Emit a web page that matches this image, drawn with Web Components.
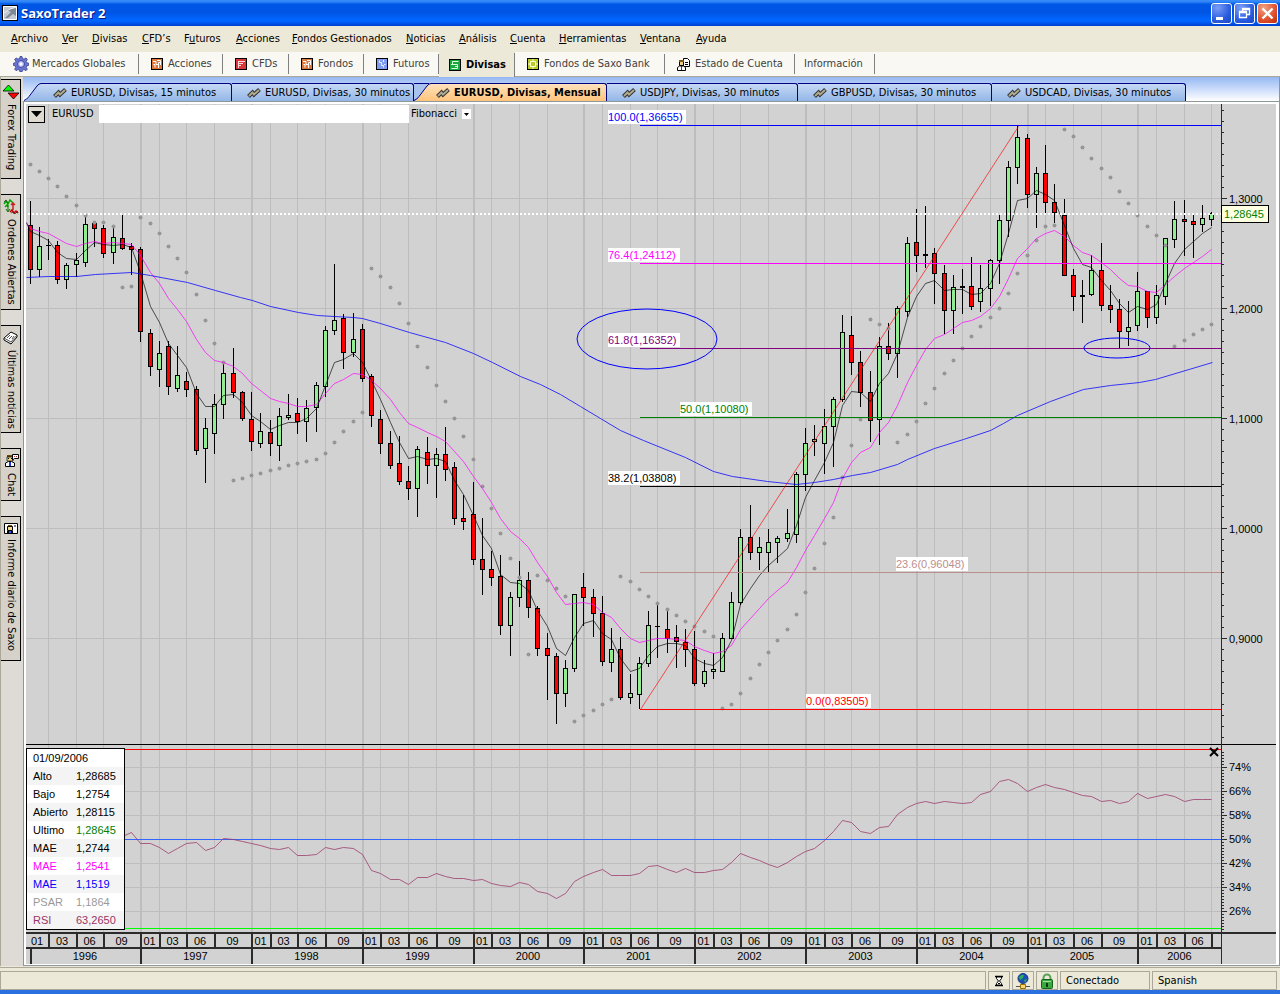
<!DOCTYPE html>
<html lang="es">
<head>
<meta charset="utf-8">
<title>SaxoTrader 2</title>
<style>
  :root {
    --face: #ece9d8;
    --shade: #aca899;
    --plot: #d2d2d2;
    --navy: #000080;
    --ui-font: "DejaVu Sans Condensed", "DejaVu Sans", sans-serif;
    --chart-font: "Liberation Sans", Arial, sans-serif;
  }

  html, body {
    margin: 0;
    height: 100%;
  }

  body {
    font: 11px/14px var(--ui-font);
    color: #000;
    background: var(--face);
  }
</style>
</head>
<body>

<sx-window>
  <sx-title-bar slot="top">SaxoTrader 2</sx-title-bar>

  <sx-menu-bar slot="top">
    <button><u>A</u>rchivo</button>
    <button><u>V</u>er</button>
    <button><u>D</u>ivisas</button>
    <button><u>C</u>FD’s</button>
    <button>F<u>u</u>turos</button>
    <button><u>A</u>cciones</button>
    <button><u>F</u>ondos Gestionados</button>
    <button><u>N</u>oticias</button>
    <button><u>A</u>nálisis</button>
    <button><u>C</u>uenta</button>
    <button><u>H</u>erramientas</button>
    <button><u>V</u>entana</button>
    <button><u>A</u>yuda</button>
  </sx-menu-bar>

  <sx-module-bar slot="top">
    <sx-module icon="gear" style="width:126px">Mercados Globales</sx-module>
    <sx-module icon="shares" style="width:84px">Acciones</sx-module>
    <sx-module icon="cfd" style="width:66px">CFDs</sx-module>
    <sx-module icon="shares" style="width:75px">Fondos</sx-module>
    <sx-module icon="futures" style="width:75px">Futuros</sx-module>
    <sx-module icon="forex" active style="width:76px">Divisas</sx-module>
    <sx-module icon="bank" style="width:150px">Fondos de Saxo Bank</sx-module>
    <sx-module icon="account" style="width:130px">Estado de Cuenta</sx-module>
    <sx-module style="width:80px">Información</sx-module>
  </sx-module-bar>

  <sx-side-tab slot="side" icon="updown" style="height:100px">Forex Trading</sx-side-tab>
  <sx-side-tab slot="side" icon="orders" style="height:116px">Ordenes Abiertas</sx-side-tab>
  <sx-side-tab slot="side" icon="news" style="height:108px">Últimas noticias</sx-side-tab>
  <sx-side-tab slot="side" icon="chat" style="height:53px">Chat</sx-side-tab>
  <sx-side-tab slot="side" icon="report" style="height:145px">Informe diario de Saxo</sx-side-tab>

  <sx-doc-tab slot="docs" slanted style="width:208px">EURUSD, Divisas, 15 minutos</sx-doc-tab>
  <sx-doc-tab slot="docs" style="width:182px">EURUSD, Divisas, 30 minutos</sx-doc-tab>
  <sx-doc-tab slot="docs" slanted active style="width:193px">EURUSD, Divisas, Mensual</sx-doc-tab>
  <sx-doc-tab slot="docs" style="width:191px">USDJPY, Divisas, 30 minutos</sx-doc-tab>
  <sx-doc-tab slot="docs" style="width:194px">GBPUSD, Divisas, 30 minutos</sx-doc-tab>
  <sx-doc-tab slot="docs" style="width:194px">USDCAD, Divisas, 30 minutos</sx-doc-tab>

  <sx-chart></sx-chart>

  <sx-status-bar slot="bottom">
    <span></span>
    <sx-icon name="hourglass"></sx-icon>
    <sx-icon name="network"></sx-icon>
    <sx-icon name="lock"></sx-icon>
    <span>Conectado</span>
    <span>Spanish</span>
  </sx-status-bar>
</sx-window>

<script>
const FACE = '<path d="M4 2h6v2H4z" fill="#6b4a10"/><path d="M4 4h6v4H4z" fill="#f3d98c" stroke="#000" stroke-width=".7"/><path d="M5 5h1v1H5zM8 5h1v1H8z" fill="#000"/><path d="M2.500 13.500V10l3-1.500h3l3 1.500v3.500z" fill="#fff" stroke="#000"/><path d="M6 9h2v4H6z" fill="#2233dd"/>';

/* name -> [size, markup] */
const ICONS = {
  app: [16, '<rect x=".5" y=".5" width="15" height="15" fill="#8b95a3" stroke="#000"/><path d="M1.500 1.500h13v13h-13z" fill="#c3c9d1" stroke="#fff"/><path d="M3 13 9 7 5 5l9-2v8l-3-2-5 4z" fill="#7d8896"/><path d="M2 8 8 4l6-2" fill="none" stroke="#eef1f4"/>'],
  gear: [16, '<g fill="#6a74d4" stroke="#2b357f" stroke-width=".7"><path d="M7 .5h2l.5 2 1.500.6 1.900-1.200 1.500 1.500-1.200 1.900.6 1.400 2 .6v2l-2 .6-.6 1.400 1.200 1.900-1.500 1.500-1.900-1.200-1.500.6-.5 2H7l-.5-2-1.500-.6-1.900 1.200-1.500-1.500 1.200-1.900-.6-1.400-2-.6v-2l2-.6.6-1.400-1.200-1.900 1.500-1.500L5 3.100l1.500-.6z"/></g><circle cx="8" cy="8" r="3.500" fill="#b8c0f4" stroke="#3d4799"/><circle cx="8" cy="8" r="1.500" fill="#fff"/>'],
  shares: [12, '<rect x=".5" y=".5" width="11" height="11" fill="#d9773c" stroke="#000"/><path d="M2 3.500h3v3h2M4 9.500v-3H2.500M6 2.500h3.500V7M9.500 4.500H7.500V10" fill="none" stroke="#fff"/>'],
  cfd: [12, '<rect x=".5" y=".5" width="11" height="11" fill="#d8383c" stroke="#000"/><path d="M3 3.500h7M3 5.500h5M3 7.500h3M3.500 3v7" fill="none" stroke="#ffd9d9"/>'],
  futures: [12, '<rect x=".5" y=".5" width="11" height="11" fill="#7f9cf0" stroke="#000"/><path d="M3.500 2.500v2h2v3h2v2M7.500 2v2M8 6.500h1.500" fill="none" stroke="#e6edff"/>'],
  forex: [12, '<rect x=".5" y=".5" width="11" height="11" fill="#16a83a" stroke="#000"/><path d="M9.500 2.500h-6v3h5v4h-6M2 5.500h2M6 7.500h2" fill="none" stroke="#d9ffe0"/>'],
  bank: [12, '<rect x=".5" y=".5" width="11" height="11" fill="#bccb2c" stroke="#000"/><path d="M3.500 3.500h5v5h-5zM6 1v2M6 9v2M1 6h2M9 6h2" fill="none" stroke="#fbffd0"/>'],
  account: [13, '<path d="M6.500.5h4l2 2v6h-6z" fill="#fff" stroke="#000"/><path d="M8 4.500h3M8 6.500h3" stroke="#000"/><path d="M2.500 2.500h4v5h-4z" fill="#f0d080" stroke="#000"/><path d="M2 2h5v2H2z" fill="#7a5a10"/><path d="M.5 12.500V9.500l2-1.500h4l2 1.500v3z" fill="#fff" stroke="#000"/><path d="M4 8h1v4H4z" fill="#23c"/>'],
  updown: [16, '<path d="M5.500 1 11 7H0z" fill="#0f0" stroke="#000" stroke-width=".8"/><path d="M5 9h11l-5.500 6z" fill="#f00" stroke="#000" stroke-width=".8"/>'],
  orders: [16, '<path d="m1 5 2-3 2 3 2-4 3 3 M2 8l2-2 1 2" fill="none" stroke="#0a0" stroke-width="1.500"/><path d="M5 6v6m-2-2 2 3 2-3" fill="none" stroke="#070"/><path d="M10 11V4M8 6l2-2 2 2" fill="none" stroke="#c22" stroke-width="1.500"/><path d="m7 13 2-2 2 3 2-2 2 2" fill="none" stroke="#c00" stroke-width="1.500"/><path d="m1 3 2-2 2 3M8 14l2-1 2 2 3-3" fill="none" stroke="#222" stroke-width=".7"/>'],
  news: [16, '<path d="m1 8 7-6 6 3v2l-6 7-7-4z" fill="#fff" stroke="#000"/><path d="m1 8 7 4 6-7M4 8l3-3M6 9l3-3M9 9l2-3" fill="none" stroke="#555"/>'],
  chat: [16, FACE + '<path d="M9.500 1.500h6v4h-4l-2 1.500z" fill="#fff" stroke="#000"/><path d="M11 3h1v1h-1zM13 3h1v1h-1z" fill="#c33"/>'],
  report: [14, '<path d="M.5 2.500h13v10H.5z" fill="#fff" stroke="#000"/><path d="M4 4h4v1H4z" fill="#6b4a10"/><path d="M3.500 5.500h5v4h-5z" fill="#f3d98c" stroke="#000"/><path d="M3 10h6v2H3z" fill="#000"/><path d="M5 10h2v2H5z" fill="#35f"/><path d="M10 4h2v2h-2z" fill="#779"/>'],
  zigzag: [14, '<path d="m1.500 10.500 4-4 1.500 2 5.500-5" fill="none" stroke="#333" stroke-width="4"/><path d="m2 10 3.500-3.500 1.500 2L12 4" fill="none" stroke="#b0ab8e" stroke-width="2"/>'],
  hourglass: [12, '<path d="M2 1.500h8M2 10.500h8" stroke="#000" stroke-width="1.500"/><path d="M3.500 2v1.500L5.500 6l-2 2.500V10h5V8.500L6.500 6l2-2.500V2z" fill="#fff" stroke="#000"/><path d="M5 9h2V8H5z"/>'],
  network: [16, '<circle cx="8" cy="5.500" r="5" fill="#1b50b8" stroke="#123a80"/><path d="M4 4q3-3 5-2l-1 3-3 2zM9 7l3-1-2 4z" fill="#2fae5a"/><path d="M1 13.500h14M8 10v2" stroke="#555"/><path d="M5.500 11.500h5v4h-5z" fill="#f6d774" stroke="#9a7100"/>'],
  lock: [16, '<path d="M4.500 8V5a3.500 3.500 0 0 1 7 0v3" fill="none" stroke="#5aa05a" stroke-width="2"/><rect x="2.500" y="6.500" width="11" height="9" rx="1" fill="#3aa83e" stroke="#14641a"/><path d="M4 8h8v1H4z" fill="#9fe09f"/><path d="M7 10h2v4H7z" fill="#0a3a10"/>'],
  minimize: [19, '<path d="M4 13h7v3H4z" fill="#fff"/>'],
  restore: [19, '<path d="M7.500 7V4.500h7v6H12M7.500 5.500h7M4.500 7.500h7v6h-7zM4.500 8.500h7" fill="none" stroke="#fff" stroke-width="1.300"/>'],
  close: [19, '<path d="m4.500 4.500 10 10m0-10-10 10" stroke="#fff" stroke-width="2.400"/>'],
};

class SxElement extends HTMLElement {
  constructor() {
    super();
    this.attachShadow({ mode: 'open' });
  }

  connectedCallback() {
    this.shadowRoot.innerHTML = this.template();
  }
}

class SxIcon extends SxElement {
  template() {
    const [size, body] = ICONS[this.getAttribute('name')];
    return `
      <style>
        :host { display: inline-flex; flex: none; }
        svg { display: block; }
      </style>
      <svg width="${size}" height="${size}" viewBox="0 0 ${size} ${size}" aria-hidden="true">${body}</svg>
    `;
  }
}

class SxWindow extends SxElement {
  template() {
    return `
      <style>
        :host {
          display: flex;
          flex-direction: column;
          min-height: 100vh;
        }

        .body {
          flex: 1;
          display: flex;
          min-height: 600px;
          border-left: 1px solid var(--shade);
          background: #dedad5;
        }

        .side {
          flex: none;
          width: 22px;
          display: flex;
          flex-direction: column;
          gap: 15px;
          padding-top: 2px;
        }

        .main {
          flex: 1;
          min-width: 0;
          display: flex;
          flex-direction: column;
          border-right: 1px solid #8d9799;
          border-bottom: 1px solid #8d9799;
        }

        .docs {
          display: flex;
          height: 18px;
          padding: 6px 0 0 1px;
          background: linear-gradient(#96b8f4, #fff);
          border-bottom: 1px solid #8d9799;
        }

        .frame {
          flex: 1;
          display: flex;
          border-left: 1px solid #8d9799;
        }

        .chart {
          flex: 1;
          display: flex;
          border: solid #fff;
          border-width: 2px 3px 1px 2px;
        }

        ::slotted(sx-chart) { flex: 1; }
      </style>
      <slot name="top"></slot>
      <div class="body">
        <div class="side"><slot name="side"></slot></div>
        <div class="main">
          <div class="docs"><slot name="docs"></slot></div>
          <div class="frame"><div class="chart"><slot></slot></div></div>
        </div>
      </div>
      <slot name="bottom"></slot>
    `;
  }
}

class SxTitleBar extends SxElement {
  template() {
    return `
      <style>
        :host {
          display: flex;
          align-items: center;
          height: 26px;
          padding: 0 2px;
          gap: 3px;
          box-sizing: border-box;
          color: #fff;
          font: bold 13px/18px "Open Sans", sans-serif;
          text-shadow: 1px 1px #0a1883;
          background: linear-gradient(#3b8cf6 0, #2c83f8 2px, #0058e6 4px, #0054e3 12px, #0066fe 20px, #005ffb 22px, #0040cc 26px);
        }

        .name { flex: 1; }

        .buttons {
          display: flex;
          gap: 2px;
        }

        button {
          width: 21px;
          height: 21px;
          padding: 0;
          border: 1px solid #fff;
          border-radius: 3px;
          display: grid;
          place-items: center;
          background: radial-gradient(circle at 30% 20%, #7a9df5, #2a5ce0 60%, #1b46c4);
        }

        .close { background: radial-gradient(circle at 30% 20%, #f0a184, #e0502c 60%, #b82c08); }
      </style>
      <sx-icon name="app"></sx-icon>
      <span class="name"><slot></slot></span>
      <div class="buttons">
        <button aria-label="Minimizar"><sx-icon name="minimize"></sx-icon></button>
        <button aria-label="Restaurar"><sx-icon name="restore"></sx-icon></button>
        <button class="close" aria-label="Cerrar"><sx-icon name="close"></sx-icon></button>
      </div>
    `;
  }
}

class SxMenuBar extends SxElement {
  template() {
    return `
      <style>
        :host {
          display: grid;
          grid-template-columns: 51px 30px 50px 42px 52px 56px 114px 53px 51px 49px 81px 56px auto;
          align-items: center;
          justify-content: start;
          height: 26px;
          padding: 0 11px;
          box-sizing: border-box;
          background: var(--face);
        }

        ::slotted(button) {
          padding: 0;
          border: 0;
          background: none;
          font: inherit;
          color: inherit;
          text-align: left;
          white-space: nowrap;
        }
      </style>
      <slot></slot>
    `;
  }
}

class SxModuleBar extends SxElement {
  template() {
    return `
      <style>
        :host {
          display: flex;
          height: 25px;
          padding-left: 13px;
          box-sizing: border-box;
          background: #f9f8f2;
          border-bottom: 1px solid var(--shade);
        }
      </style>
      <slot></slot>
    `;
  }
}

class SxModule extends SxElement {
  template() {
    const icon = this.getAttribute('icon');
    return `
      <style>
        :host { display: flex; flex: none; padding: 2px 0; box-sizing: border-box; }

        button {
          flex: 1;
          display: flex;
          align-items: center;
          gap: 5px;
          padding: 0 0 0 ${icon ? 12 : 9}px;
          border: 0;
          border-right: 1px solid #808080;
          background: none;
          font: inherit;
          color: #404040;
          white-space: nowrap;
        }

        :host([icon="gear"]) button { padding-left: 0; gap: 3px; }

        :host([active]) {
          margin-bottom: -1px;
          padding: 1px 0 0;
          background: var(--face);
        }

        :host([active]) button {
          color: #000;
          font-weight: bold;
          padding-left: 10px;
        }
      </style>
      <button>${icon ? `<sx-icon name="${icon}"></sx-icon>` : ''}<slot></slot></button>
    `;
  }
}

class SxSideTab extends SxElement {
  template() {
    return `
      <style>
        :host { display: flex; width: 20px; }

        button {
          flex: 1;
          display: flex;
          flex-direction: column;
          align-items: center;
          gap: 4px;
          min-width: 0;
          padding: 4px 0 0;
          border: 1px solid #000;
          border-left: 0;
          background: #d6d1c9;
          font: inherit;
          color: inherit;
        }

        span {
          writing-mode: vertical-rl;
          white-space: nowrap;
        }
      </style>
      <button><sx-icon name="${this.getAttribute('icon')}"></sx-icon><span><slot></slot></span></button>
    `;
  }
}

class SxDocTab extends SxElement {
  template() {
    const active = this.hasAttribute('active');
    const top = active ? '#ffe2bd' : '#c6d9f4';
    const bottom = active ? '#ffc47c' : '#94b6e8';
    return `
      <style>
        :host {
          display: flex;
          flex: none;
          height: 18px;
        }

        :host([active]) { font-weight: bold; }

        svg { display: none; flex: none; }
        :host([slanted]) svg { display: block; }

        button {
          flex: 1;
          min-width: 0;
          display: flex;
          align-items: center;
          gap: 4px;
          padding: 0 0 0 15px;
          border: 0;
          border-top: 1px solid var(--navy);
          border-right: 1px solid var(--navy);
          border-top-right-radius: 3px;
          background: linear-gradient(${top}, ${bottom});
          font: inherit;
          color: inherit;
          white-space: nowrap;
        }

        :host([slanted]) button { padding-left: 12px; }
        :host([active]) button { padding-left: 5px; }
      </style>
      <svg width="17" height="18" viewBox="0 0 17 18" aria-hidden="true">
        <defs>
          <linearGradient id="fill" x2="0" y2="1">
            <stop stop-color="${top}"/>
            <stop offset="1" stop-color="${bottom}"/>
          </linearGradient>
        </defs>
        ${active ? '<path d="M0 0h15L2 18H0z" fill="#a8c4ee"/><path d="M0 .5h15" stroke="#000080"/>' : ''}
        <path d="M0 18q3-1 5-4l8-11q2-3 4-3v18z" fill="url(#fill)"/>
        <path d="M0 17.500q3-1 5-4l8-10.500q2-2.500 4-2.500" fill="none" stroke="#000080"/>
      </svg>
      <button><sx-icon name="zigzag"></sx-icon><slot></slot></button>
    `;
  }
}

class SxStatusBar extends SxElement {
  template() {
    return `
      <style>
        :host {
          display: grid;
          grid-template-columns: 1fr 22px 22px 22px 90px 125px;
          gap: 2px;
          height: 27px;
          padding: 3px 3px 0 0;
          margin-top: 1px;
          box-sizing: border-box;
          background: var(--face);
          border-top: 1px solid var(--shade);
          border-bottom: 4px solid #2a70e0;
        }

        ::slotted(*) {
          display: flex;
          align-items: center;
          padding-left: 5px;
          height: 19px;
          box-sizing: border-box;
          border: 1px solid var(--shade);
        }

        ::slotted(sx-icon) {
          justify-content: center;
          padding: 0;
        }
      </style>
      <slot></slot>
    `;
  }
}

/* Monthly bars from January 1996: high, body top, body bottom, low, in plot units.
   u = closed up, d = closed down, n = unchanged. */
const BARS = `
201,225,270,284,d 227,246,270,277,u 239,245,246,260,n 241,245,280,284,d 263,265,280,289,u 253,260,265,277,u
216,224,263,267,u 222,223,229,247,d 225,228,254,258,d 226,237,253,264,u 215,238,249,250,d 243,246,250,275,d
247,249,332,342,d 329,333,367,376,d 341,353,370,387,u 341,346,387,395,d 346,375,389,392,u 372,381,390,397,d
386,389,451,455,d 418,428,449,483,u 394,404,434,454,u 363,373,405,419,u 348,373,393,398,d 391,392,419,421,d
392,419,442,451,d 413,431,444,448,u 420,432,444,456,d 408,416,446,461,u 394,415,418,420,u 398,413,422,434,d
400,408,422,442,u 382,385,408,432,u 326,330,387,397,u 264,320,331,335,u 314,318,353,369,d 313,339,353,357,u
324,329,379,382,d 374,376,416,427,d 410,419,444,454,d 431,443,466,469,d 436,463,482,485,d 466,481,489,500,d
446,449,489,517,u 437,452,466,484,d 448,454,466,498,u 427,454,470,481,d 462,467,519,525,d 495,518,522,530,d
482,514,560,565,d 518,559,570,595,d 551,569,578,586,d 555,576,626,635,d 592,597,626,656,u 561,580,598,607,u
572,580,608,618,d 606,608,649,656,d 633,648,656,700,d 653,656,694,724,d 660,668,694,707,u 594,594,669,672,u
573,587,598,626,d 589,597,614,637,d 596,613,662,666,d 628,649,663,672,u 637,649,698,700,d 674,693,698,704,u
657,663,695,709,u 611,625,664,667,u 604,626,627,658,n 611,629,639,653,d 625,637,642,668,d 629,642,650,667,d
631,649,684,686,d 660,671,684,687,u 653,669,672,679,u 633,638,672,672,u 592,602,639,639,u 529,537,603,605,u
505,537,553,560,d 537,547,553,570,u 529,542,553,572,u 536,538,543,563,u 509,533,539,542,u 472,474,535,543,u
428,443,475,491,u 425,439,442,456,u 409,426,444,474,u 397,399,427,467,u 315,332,400,402,u 316,335,363,375,d
351,362,393,407,d 371,392,421,442,d 337,346,420,445,u 323,346,354,360,d 306,308,354,378,u 237,243,312,317,u
209,242,256,272,d 206,254,256,268,n 248,253,274,304,d 265,273,311,334,d 275,287,311,334,u 269,286,288,314,n
257,286,307,310,d 265,288,302,312,u 259,260,289,306,u 215,220,261,284,u 161,167,221,237,u 126,137,168,184,u
134,138,195,208,d 167,173,195,228,u 145,173,203,215,d 184,202,213,223,d 199,215,276,276,d 269,275,297,311,d
280,295,297,323,n 255,270,295,296,u 243,270,306,311,d 285,305,310,323,d 299,309,332,348,d 301,327,332,346,u
272,291,326,331,u 291,291,318,328,d 285,295,318,324,u 238,238,297,305,u 201,219,240,248,u 200,219,222,256,d
213,221,225,258,d 205,218,225,232,u 212,213,220,226,u
`.trim().split(/\s+/).map(bar => bar.split(','));

const FAST = [
  231, 235, 240, 252, 258, 259, 250, 242, 244, 245, 244, 247, 272, 306, 322, 343, 355, 367, 393, 406, 406, 395,
  394, 402, 415, 421, 429, 425, 422, 422, 418, 408, 385, 362, 359, 353, 362, 380, 399, 422, 442, 458, 456, 459,
  458, 461, 480, 494, 515, 535, 548, 574, 582, 583, 590, 610, 626, 648, 655, 637, 623, 620, 633, 639, 658, 671,
  668, 655, 646, 643, 643, 645, 658, 663, 665, 657, 640, 604, 588, 575, 565, 557, 548, 525, 497, 480, 462, 442,
  405, 391, 392, 401, 383, 373, 353, 317, 296, 283, 280, 290, 289, 289, 294, 293, 283, 263, 233, 200, 198, 190,
  194, 200, 225, 248, 264, 267, 280, 290, 303, 312, 306, 309, 304, 283, 263, 249, 241, 233, 227,
];

const MEDIUM = [
  228, 231, 233, 238, 243, 246, 243, 241, 243, 242, 243, 244, 255, 272, 283, 298, 309, 321, 339, 352, 360, 362,
  366, 373, 383, 390, 398, 401, 403, 406, 406, 404, 393, 383, 379, 373, 374, 380, 388, 399, 412, 423, 427, 432,
  436, 441, 451, 461, 476, 488, 502, 518, 531, 538, 547, 562, 576, 592, 604, 603, 602, 604, 612, 617, 628, 638,
  642, 640, 638, 638, 639, 640, 646, 650, 653, 651, 645, 629, 618, 608, 598, 590, 582, 567, 550, 535, 518, 502,
  478, 462, 452, 447, 432, 422, 405, 382, 365, 349, 338, 334, 328, 322, 320, 316, 308, 296, 278, 258, 248, 238,
  233, 230, 236, 245, 252, 255, 262, 269, 278, 285, 286, 291, 292, 284, 276, 268, 262, 256, 249,
];

const SLOW = [
  [26, 277], [48, 276], [76, 276], [95, 274], [131, 272], [150, 275], [187, 282], [215, 290], [240, 297],
  [252, 300], [270, 306], [298, 312], [317, 315], [334, 316], [353, 317], [362, 318], [380, 323], [409, 332],
  [445, 342], [473, 353], [492, 362], [520, 376], [540, 384], [560, 394], [580, 406], [600, 418], [620, 430],
  [643, 440], [685, 457], [713, 471], [732, 476], [767, 481], [796, 484], [814, 482], [833, 479], [852, 475],
  [870, 472], [897, 464], [907, 459], [934, 448], [963, 439], [990, 430], [1003, 423], [1017, 415], [1050, 401],
  [1083, 389], [1110, 385], [1139, 382], [1155, 379], [1212, 362],
];

const PSAR = [
  164, 171, 178, 186, 196, 205, 215, 222, 222, 226, 287, 286, 217, 223, 233, 246, 258, 272, 294, 320, 343, 362,
  480, 478, 475, 473, 470, 468, 465, 463, 461, 459, 453, 442, 431, 421, 412, 268, 276, 287, 303, 323, 346, 367,
  385, 401, 418, 436, 459, 486, 508, 533, 558, 577, 654, 575, 580, 588, 596, 721, 715, 710, 704, 699, 576, 581,
  589, 596, 603, 609, 615, 621, 626, 631, 636, 708, 704, 693, 678, 664, 652, 640, 629, 614, 592, 568, 543, 517,
  477, 445, 419, 319, 324, 328, 442, 434, 421, 403, 388, 373, 360, 348, 336, 326, 317, 308, 293, 273, 255, 240,
  226, 225, 129, 136, 147, 158, 168, 177, 191, 203, 215, 226, 235, 245, 346, 340, 334, 329, 324,
];

/* RSI from November 1996 */
const RSI = [
  836, 832, 843, 843, 847, 853, 848, 843, 842, 850, 847, 838, 839, 841, 843, 845, 848, 849, 847, 855, 855, 854,
  847, 849, 847, 848, 854, 870, 873, 879, 879, 884, 877, 877, 873, 876, 878, 878, 880, 879, 883, 885, 886, 882,
  884, 891, 893, 898, 893, 881, 876, 872, 869, 875, 875, 875, 873, 866, 865, 869, 872, 868, 872, 872, 870, 869,
  862, 853, 857, 860, 864, 867, 862, 856, 851, 848, 840, 831, 820, 822, 831, 833, 827, 826, 814, 807, 803, 801,
  803, 801, 802, 803, 802, 794, 791, 781, 779, 783, 791, 787, 784, 787, 789, 792, 795, 796, 801, 800, 803, 801,
  793, 798, 796, 794, 796, 801, 799, 799, 799,
];

const FIBONACCI = [
  { y: 125, x: 608, w: 78, text: '100.0(1,36655)', color: '#0000ff' },
  { y: 263, x: 608, w: 72, text: '76.4(1,24112)', color: '#ff00ff' },
  { y: 348, x: 608, w: 72, text: '61.8(1,16352)', color: '#800080' },
  { y: 417, x: 680, w: 72, text: '50.0(1,10080)', color: '#008000' },
  { y: 486, x: 608, w: 72, text: '38.2(1,03808)', color: '#000000' },
  { y: 572, x: 896, w: 72, text: '23.6(0,96048)', color: '#bc8f8f' },
  { y: 709, x: 806, w: 65, text: '0.0(0,83505)', color: '#ff0000' },
];

const LEFT = 26;
const TOP = 104;
const AXIS_WIDTH = 54;
const RSI_HEIGHT = 188;
const TIME_HEIGHT = 32;

class SxChart extends SxElement {
  connectedCallback() {
    super.connectedCallback();
    this.draw();
    this.observer = new ResizeObserver(() => this.draw());
    this.observer.observe(this);
  }

  disconnectedCallback() {
    this.observer.disconnect();
  }

  template() {
    return `
      <style>
        :host {
          display: block;
          position: relative;
          overflow: hidden;
          min-height: 480px;
          background: var(--plot);
          font: 11px/14px var(--chart-font);
        }

        .canvas {
          position: absolute;
          inset: 0;
          width: 100%;
          height: 100%;
        }

        .crisp { shape-rendering: crispEdges; }

        .tools {
          position: relative;
          display: flex;
          align-items: center;
          gap: 5px;
          height: 18px;
          padding: 1px 0 0 2px;
          font-family: var(--ui-font);
        }

        .drop {
          width: 17px;
          height: 17px;
          padding: 0;
          margin-right: 2px;
          border: 1px solid #000;
          background: #dedad0;
          display: grid;
          place-items: center;
        }

        .symbol {
          width: 310px;
          height: 18px;
          padding: 0 3px;
          margin-right: -3px;
          border: 0;
          box-sizing: border-box;
          background: #fff;
          font: inherit;
        }

        label { width: 42px; white-space: nowrap; }

        .study {
          display: flex;
          align-items: center;
          position: relative;
        }

        select {
          appearance: none;
          width: 60px;
          padding: 0 10px 0 0;
          border: 0;
          background: none;
          font: inherit;
          color: inherit;
        }

        .study svg {
          position: absolute;
          right: 0;
          pointer-events: none;
        }

        .values {
          position: absolute;
          left: 0;
          bottom: 34px;
          width: 99px;
          border: 1px solid #000;
          border-collapse: separate;
          border-spacing: 0;
          box-sizing: border-box;
          background: #fff;
        }

        .values tr { height: 18px; }
        .values tr:nth-child(even) { background: #f4f4f4; }

        .values th,
        .values td {
          padding: 0 0 0 6px;
          font-weight: normal;
          text-align: left;
          white-space: nowrap;
        }

        .values th { width: 37px; }

        .remove {
          position: absolute;
          right: 56px;
          bottom: 206px;
          width: 12px;
          height: 12px;
          padding: 0;
          border: 0;
          background: none;
        }

        .remove svg { display: block; }
      </style>
      <svg class="canvas" role="img" aria-label="EURUSD, Divisas, Mensual"></svg>
      <div class="tools">
        <button class="drop" aria-label="Opciones"><svg width="11" height="6"><path d="M0 0h11L5.500 6z"/></svg></button>
        <label for="symbol">EURUSD</label>
        <input id="symbol" class="symbol">
        <span class="study">
          <select aria-label="Estudio"><option>Fibonacci</option></select>
          <svg width="9" height="10"><path d="M0 0h9v10H0z" fill="#fff"/><path d="M2 4h5L4.500 7z"/></svg>
        </span>
      </div>
      <table class="values">
        <tr><th colspan="2">01/09/2006</th></tr>
        <tr><th>Alto</th><td>1,28685</td></tr>
        <tr><th>Bajo</th><td>1,2754</td></tr>
        <tr><th>Abierto</th><td>1,28115</td></tr>
        <tr><th>Ultimo</th><td style="color:#008000">1,28645</td></tr>
        <tr><th>MAE</th><td>1,2744</td></tr>
        <tr style="color:#f0f"><th>MAE</th><td>1,2541</td></tr>
        <tr style="color:#00f"><th>MAE</th><td>1,1519</td></tr>
        <tr style="color:#999"><th>PSAR</th><td>1,1864</td></tr>
        <tr style="color:#936"><th>RSI</th><td>63,2650</td></tr>
      </table>
      <button class="remove" aria-label="Quitar RSI"><svg width="12" height="12"><path d="m2 2 8 8m0-8-8 8" stroke="#000" stroke-width="2"/></svg></button>
    `;
  }

  draw() {
    const width = this.clientWidth;
    const height = this.clientHeight;
    if (!width || !height) return;

    const plotWidth = width - AXIS_WIDTH;
    const priceHeight = height - RSI_HEIGHT - TIME_HEIGHT;
    const timeTop = height - TIME_HEIGHT;

    const px = x => Math.round((x - LEFT) * plotWidth / 1196);
    const py = y => Math.round((y - TOP) * priceHeight / 640);
    const ry = y => y - 744 + priceHeight;
    const month = i => px(30 + Math.floor(i * 9.233));
    const price = p => py(198 + (1.3 - p) * 1100);

    const rect = (x, y, w, h, fill) => `<rect x="${x}" y="${y}" width="${w}" height="${h}" fill="${fill}"/>`;
    const text = (x, y, value, fill = '#000', anchor = 'start') =>
      `<text x="${x}" y="${y}" fill="${fill}" text-anchor="${anchor}">${value}</text>`;
    const line = (points, stroke, opacity = 1) =>
      `<polyline points="${points.map(([x, y]) => `${x + 0.5},${y + 0.5}`).join(' ')}" fill="none" stroke="${stroke}" stroke-opacity="${opacity}"/>`;

    let grid = '';
    let axis = '';
    let labels = '';

    /* vertical grid and time scale */
    axis += rect(0, timeTop, width, 2, '#2b2b2b');
    axis += rect(0, timeTop + 15, plotWidth, 2, '#2b2b2b');
    const marks = [];
    for (let year = 0; year < 11; year++) {
      for (const start of [0, 2, 5, 8]) marks.push(year * 12 + start);
    }
    marks.forEach((i, n) => {
      const x = month(i);
      const january = i % 12 === 0;
      if (i) {
        grid += rect(x, 0, january ? 2 : 1, timeTop, '#bdbdbd');
        axis += rect(x, timeTop, 2, 15, '#2b2b2b');
      }
      if (january) axis += rect(x, timeTop + 15, 2, 17, '#2b2b2b');
      const left = i ? x : 0;
      const right = n + 1 < marks.length ? month(marks[n + 1]) : plotWidth;
      if (i < 128) labels += text((left + right) / 2, timeTop + 13, String(i % 12 + 1).padStart(2, '0'), '#000', 'middle');
      if (january) {
        const end = Math.min(month(i + 12), plotWidth);
        labels += text((x + end) / 2, timeTop + 28, 1996 + i / 12, '#000', 'middle');
      }
    });

    /* price scale */
    axis += rect(plotWidth - 1, 0, 1, height, '#2b2b2b');
    for (let cents = 81; cents <= 138; cents++) {
      const y = price(cents / 100);
      const major = cents % 10 === 0;
      if (y < 2 || y > priceHeight - 2) continue;
      axis += rect(plotWidth, y, major ? 5 : 2, 1, '#2b2b2b');
      if (major) {
        grid += rect(0, y, plotWidth, 1, '#bdbdbd');
        labels += text(plotWidth + 7, y + 5, (cents / 100).toFixed(4).replace('.', ','));
      }
    }

    /* RSI scale, three pixels to the point */
    for (let level = 20; level <= 79; level++) {
      const y = ry(839 + (50 - level) * 3);
      const major = (level - 26) % 8 === 0;
      axis += rect(plotWidth, y, major ? 5 : 2, 1, '#2b2b2b');
      if (major) {
        grid += rect(0, y, plotWidth, 1, '#bdbdbd');
        labels += text(plotWidth + 7, y + 4, `${level}%`);
      }
    }

    let fib = '';
    let fibLabels = '';
    for (const f of FIBONACCI) {
      const y = py(f.y);
      fib += rect(px(640), y, plotWidth - px(640), 1, f.color);
      fibLabels += rect(px(f.x), y - 15, f.w, 14, '#fff') + text(px(f.x), y - 4, f.text, f.color);
    }

    let bars = '';
    BARS.forEach(([high, top, bottom, low, dir], i) => {
      const x = month(i);
      const t = py(+top);
      const h = Math.max(py(+bottom) - t, 1);
      bars += rect(x, py(+high), 1, Math.max(py(+low) - py(+high), 1), '#000');
      bars += rect(x - 2, t, 5, h, '#000');
      if (dir !== 'n' && h > 2) bars += rect(x - 1, t + 1, 3, h - 2, dir === 'u' ? '#90ee90' : '#f00');
    });

    const dots = PSAR.map((y, i) => `<circle cx="${month(i) + 0.5}" cy="${py(y) + 0.5}" r="2" fill="#969696"/>`).join('');
    const lastY = price(1.28645);

    this.shadowRoot.querySelector('.canvas').innerHTML = `
      <g class="crisp">${grid}</g>
      <g class="crisp">${bars}</g>
      ${dots}
      ${line([[0, py(223)], ...MEDIUM.map((y, i) => [month(i), py(y)])], '#f0f', 0.7)}
      ${line([[0, py(222)], ...FAST.map((y, i) => [month(i), py(y)])], '#000', 0.65)}
      ${line(SLOW.map(([x, y]) => [px(x), py(y)]), '#00f', 0.75)}
      <path class="crisp" d="M2 ${lastY + 1}H${plotWidth}" stroke="#fff" stroke-width="2" stroke-dasharray="2 2"/>
      <g class="crisp">${fib}</g>
      ${line([[px(640), py(709)], [px(1018), py(126)]], '#f00', 0.65)}
      ${fibLabels}
      <g fill="none" stroke="#00f">
        <ellipse cx="${px(647)}" cy="${py(339)}" rx="70" ry="30"/>
        <ellipse cx="${px(1117)}" cy="${py(348)}" rx="33" ry="10"/>
      </g>
      <g class="crisp">
        ${rect(0, ry(749), plotWidth, 1, '#f00')}
        ${rect(0, ry(839), plotWidth, 1, '#36f')}
        ${rect(0, ry(928), plotWidth, 1, '#0f0')}
        ${rect(0, priceHeight, width, 1, '#000')}
      </g>
      ${line(RSI.map((y, i) => [month(i + 10), ry(y)]), '#936', 0.75)}
      <g class="crisp">${axis}</g>
      ${labels}
      <rect x="${plotWidth - 0.5}" y="${lastY - 7.5}" width="47" height="17" fill="#ffffe1" stroke="#000"/>
      ${text(plotWidth + 2, lastY + 5, '1,28645', '#008000')}
    `;
  }
}

customElements.define('sx-icon', SxIcon);
customElements.define('sx-window', SxWindow);
customElements.define('sx-title-bar', SxTitleBar);
customElements.define('sx-menu-bar', SxMenuBar);
customElements.define('sx-module-bar', SxModuleBar);
customElements.define('sx-module', SxModule);
customElements.define('sx-side-tab', SxSideTab);
customElements.define('sx-doc-tab', SxDocTab);
customElements.define('sx-status-bar', SxStatusBar);
customElements.define('sx-chart', SxChart);
</script>
</body>
</html>
